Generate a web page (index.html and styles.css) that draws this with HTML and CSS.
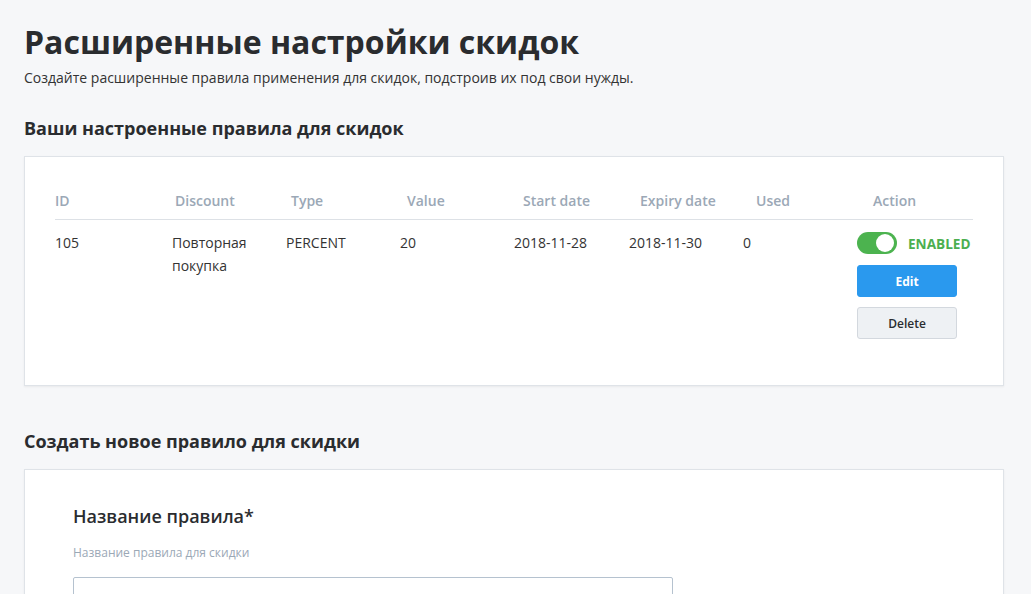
FILE: index.html
```html
<!DOCTYPE html>
<html lang="ru">
<head>
<meta charset="utf-8">
<title>Расширенные настройки скидок</title>
<link rel="stylesheet" href="styles.css">
</head>
<body>
<main class="page">
  <h1 class="title">Расширенные настройки скидок</h1>
  <p class="subtitle">Создайте расширенные правила применения для скидок, подстроив их под свои нужды.</p>

  <h2 class="section-title">Ваши настроенные правила для скидок</h2>
  <section class="card card-rules">
    <div class="table-head">
      <div>ID</div>
      <div>Discount</div>
      <div>Type</div>
      <div>Value</div>
      <div>Start date</div>
      <div>Expiry date</div>
      <div>Used</div>
      <div class="head-action">Action</div>
    </div>
    <div class="table-row">
      <div>105</div>
      <div>Повторная<br>покупка</div>
      <div>PERCENT</div>
      <div>20</div>
      <div>2018-11-28</div>
      <div>2018-11-30</div>
      <div>0</div>
      <div class="actions">
        <div class="status">
          <span class="toggle"><span class="knob"></span></span>
          <span class="status-text">ENABLED</span>
        </div>
        <button class="btn btn-primary">Edit</button>
        <button class="btn btn-default">Delete</button>
      </div>
    </div>
  </section>

  <h2 class="section-title section-title-2">Создать новое правило для скидки</h2>
  <section class="card card-form">
    <h3 class="field-title">Название правила*</h3>
    <label class="field-label" for="rule-name">Название правила для скидки</label>
    <input class="field-input" id="rule-name" type="text">
  </section>
</main>
</body>
</html>
```
FILE: styles.css
```css
html, body {
  margin: 0;
  padding: 0;
  background: #f6f7f9;
  font-family: "Open Sans", "Liberation Sans", sans-serif;
  color: #2b2d30;
  overflow: hidden;
}

.page {
  padding: 20px 27px 0 24px;
}

.title {
  margin: 0;
  font-size: 32px;
  line-height: 44px;
  font-weight: 700;
  color: #2a2c2f;
}

.subtitle {
  margin: 4px 0 0;
  font-size: 14px;
  line-height: 19px;
  color: #333;
}

.section-title {
  margin: 28px 0 0;
  font-size: 18px;
  line-height: 26px;
  font-weight: 700;
  color: #2a2c2f;
}

.section-title-2 {
  margin-top: 42px;
}

.card {
  background: #fff;
  border: 1px solid #dfe3e8;
  box-shadow: 0 1px 2px rgba(0, 0, 0, 0.06);
  margin-top: 15px;
}

.card-rules {
  height: 230px;
  padding: 0 30px 0 30px;
  box-sizing: border-box;
}

.table-head {
  display: grid;
  grid-template-columns: 120px 116px 116px 116px 117px 116px 101px 1fr;
  margin-top: 34px;
  padding-bottom: 8px;
  border-bottom: 1px solid #dde1e6;
  font-size: 14px;
  line-height: 20px;
  font-weight: 600;
  color: #9ba8b6;
}

.head-action {
  padding-left: 16px;
}

.table-row {
  display: grid;
  grid-template-columns: 117px 114px 114px 114px 115px 114px 114px 1fr;
  padding-top: 11px;
  font-size: 14px;
  line-height: 23px;
  color: #333;
}

.actions {
  display: flex;
  flex-direction: column;
  align-items: flex-start;
}

.status {
  display: flex;
  align-items: center;
  gap: 11px;
  height: 22px;
  margin-top: 1px;
}

.toggle {
  position: relative;
  display: block;
  width: 40px;
  height: 22px;
  border-radius: 11px;
  background: #4cb34f;
}

.knob {
  position: absolute;
  top: 2px;
  right: 3px;
  width: 18px;
  height: 18px;
  border-radius: 50%;
  background: #fff;
}

.status-text {
  font-size: 13.6px;
  font-weight: 700;
  color: #4caf50;
}

.btn {
  width: 100px;
  height: 32px;
  border-radius: 3px;
  font-family: "Open Sans", "Liberation Sans", sans-serif;
  font-size: 12px;
  cursor: pointer;
  padding: 0;
}

.btn-primary {
  margin-top: 11px;
  background: #2a99ee;
  border: 1px solid #2a99ee;
  color: #fff;
  font-weight: 700;
}

.btn-default {
  margin-top: 10px;
  background: #eef1f4;
  border: 1px solid #d3d8de;
  color: #2b2d30;
  font-weight: 600;
}

.card-form {
  height: 200px;
  padding: 33px 48px 0;
  box-sizing: border-box;
}

.field-title {
  margin: 0;
  font-size: 18px;
  line-height: 26px;
  font-weight: 600;
  color: #2a2c2f;
}

.field-label {
  display: block;
  margin-top: 15px;
  font-size: 12px;
  line-height: 17px;
  color: #9ba8b6;
}

.field-input {
  display: block;
  margin-top: 16px;
  width: 600px;
  height: 34px;
  box-sizing: border-box;
  border: 1px solid #b5c2cf;
  border-radius: 2px;
  background: #fff;
}
```
